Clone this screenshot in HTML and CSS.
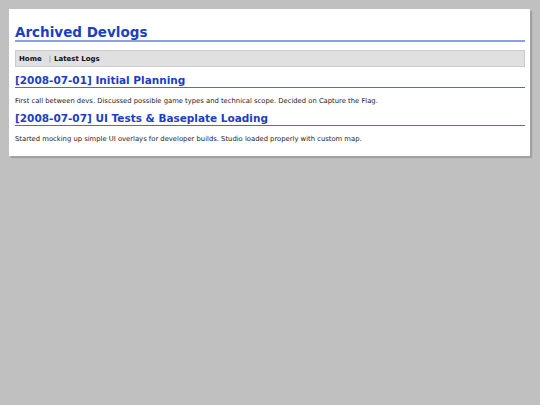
FILE: index.html
```html
<!DOCTYPE html>
<html>
<head>
	<title>Archived Devlogs</title>
	<link rel="stylesheet" href="styles.css">
</head>
<body>
	<div class="page">
		<h1 class="title">Archived Devlogs</h1>

		<div class="nav">
			<a href="#">Home</a>
			<span class="sep">|</span>
			<a href="#">Latest Logs</a>
		</div>

		<h2 class="logTitle">[2008-07-01] Initial Planning</h2>
		<p class="logText">First call between devs. Discussed possible game types and technical scope. Decided on Capture the Flag.</p>

		<h2 class="logTitle">[2008-07-07] UI Tests &amp; Baseplate Loading</h2>
		<p class="logText">Started mocking up simple UI overlays for developer builds. Studio loaded properly with custom map.</p>
	</div>
</body>
</html>
```

FILE: styles.css
```css
body {
	margin: 0;
	padding: 9px 10px 9px 9px;
	background-color: #c0c0c0;
	font-family: "DejaVu Sans", Verdana, sans-serif;
}

.page {
	background-color: #ffffff;
	padding: 15px 5px 13px 6px;
	box-shadow: 2px 2px 1px #a0a0a0;
}

.title {
	margin: 0;
	font-size: 13.5px;
	line-height: 16px;
	color: #1a40c0;
	border-bottom: 2px solid #8ea0e0;
}

.nav {
	display: flex;
	align-items: center;
	margin-top: 8px;
	height: 15px;
	padding: 0 3px;
	background-color: #e0e0e0;
	border: 1px solid #cccccc;
	font-size: 7px;
	font-weight: bold;
}

.nav a {
	color: #111111;
	text-decoration: none;
}

.sep {
	color: #888888;
	font-weight: normal;
	margin: 0 3px 0 7px;
}

.logTitle {
	margin: 7px 0 0 0;
	font-size: 10.5px;
	line-height: 13px;
	color: #1a40c0;
	border-bottom: 1px solid #4f70b8;
}

.logText {
	margin: 9px 0 -1px 0;
	font-size: 6.8px;
	line-height: 9px;
	color: #222222;
}
```
